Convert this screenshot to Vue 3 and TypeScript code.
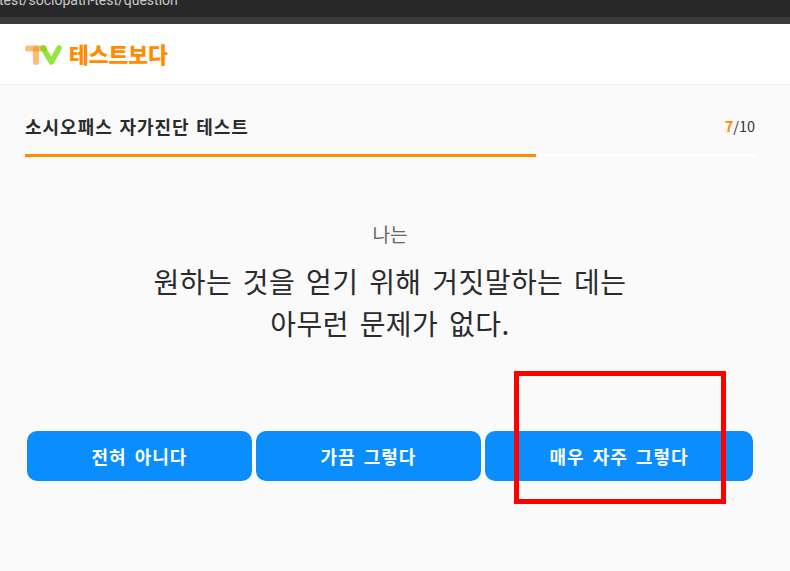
<script setup lang="ts">
const choices = [
  { label: '전혀 아니다', cls: 'wide-a' },
  { label: '가끔 그렇다', cls: 'wide-a' },
  { label: '매우 자주 그렇다', cls: 'wide-b' },
]
const current = 7
const total = 10
const percent = (current / total) * 100
</script>

<template>
  <div class="page">
    <div class="browser">
      <div class="url-row"><span class="url">test/sociopath-test/question</span></div>
      <div class="tab-edge"></div>
    </div>
    <header class="site-header">
      <svg class="logo" width="38" height="22" viewBox="0 0 38 22">
        <path d="M3 4.5H19" stroke="#ff8c1a" stroke-opacity=".6" stroke-width="6" stroke-linecap="round" fill="none" />
        <path d="M11 5V18" stroke="#ff8c1a" stroke-opacity=".6" stroke-width="6" stroke-linecap="round" fill="none" />
        <path d="M18 4L26.5 18L34 4" stroke="#6fdc00" stroke-opacity=".75" stroke-width="5.5" stroke-linecap="round" stroke-linejoin="round" fill="none" />
      </svg>
      <span class="brand">테스트보다</span>
    </header>
    <main class="content">
      <div class="title-row">
        <h1 class="title">소시오패스 자가진단 테스트</h1>
        <span class="count"><b>{{ current }}</b>/{{ total }}</span>
      </div>
      <div class="track"><div class="fill" :style="{ width: percent + '%' }"></div></div>
      <p class="lead">나는</p>
      <h2 class="question">원하는 것을 얻기 위해 거짓말하는 데는<br />아무런 문제가 없다.</h2>
      <div class="choices">
        <button v-for="c in choices" :key="c.label" class="choice" :class="c.cls">{{ c.label }}</button>
      </div>
    </main>
    <div class="mark"></div>
  </div>
</template>

<style>
html, body { margin: 0; padding: 0; }
</style>

<style scoped>
.page {
  position: relative;
  width: 790px;
  height: 571px;
  overflow: hidden;
  background: #fafafa;
  font-family: "Noto Sans CJK KR", "Noto Sans", sans-serif;
}
.browser { display: flex; flex-direction: column; height: 24px; }
.url-row { height: 17px; background: #282828; overflow: hidden; }
.url {
  display: block;
  margin-top: -9px;
  margin-left: -1px;
  font: 14px/18px "Roboto", sans-serif;
  color: #c8c8c8;
}
.tab-edge { height: 7px; background: #3b3b3b; }
.site-header {
  display: flex;
  align-items: center;
  gap: 6px;
  height: 61px;
  padding: 0 25px;
  box-sizing: border-box;
  background: #fff;
  border-bottom: 1px solid #eee;
}
.logo { margin-top: 2px; flex: none; }
.brand {
  font-size: 21.5px;
  line-height: 24px;
  font-weight: 900;
  color: #ff8c00;
}
.content { padding: 0 35px 0 25px; }
.title-row {
  display: flex;
  justify-content: space-between;
  align-items: center;
  height: 69px;
  padding-top: 12px;
  box-sizing: border-box;
}
.title {
  margin: 0;
  font-size: 18px;
  font-weight: 700;
  letter-spacing: 1px;
  word-spacing: 1.5px;
  color: #2b2b2b;
}
.count { font-size: 14.5px; color: #333; }
.count b { color: #ff8c00; }
.track { height: 3px; background: #fff; }
.fill { height: 100%; background: #ff8c00; }
.lead {
  margin: 65px 0 0;
  text-align: center;
  font-size: 19px;
  line-height: 24px;
  color: #666;
}
.question {
  margin: 14px 0 0;
  text-align: center;
  font-size: 28px;
  line-height: 42px;
  font-weight: 400;
  letter-spacing: .45px;
  word-spacing: 4px;
  color: #2b2b2b;
}
.choices {
  display: flex;
  gap: 4px;
  margin: 87px 2px 0;
}
.choice {
  height: 50px;
  border: 0;
  border-radius: 10px;
  background: #0a8dff;
  color: #fff;
  font-family: inherit;
  font-size: 18px;
  font-weight: 700;
  letter-spacing: 1px;
  word-spacing: 3px;
  padding: 0;
}
.wide-a { width: 225px; flex: none; }
.wide-b { flex: 1; }
.mark {
  position: absolute;
  left: 514px;
  top: 371px;
  width: 212px;
  height: 133px;
  box-sizing: border-box;
  border: 5px solid #f00;
}
</style>
